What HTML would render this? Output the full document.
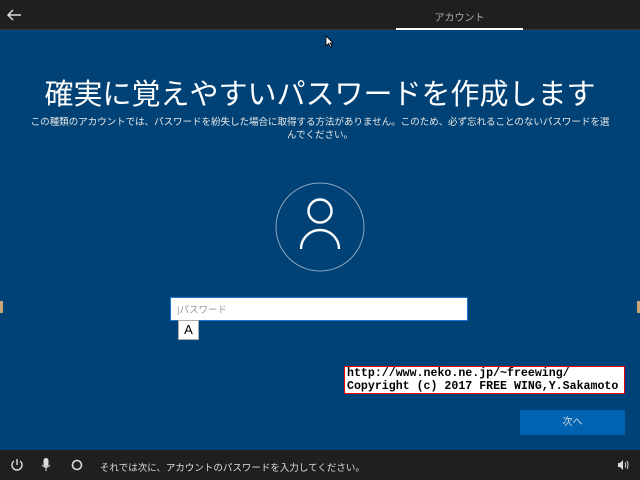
<!DOCTYPE html>
<html><head><meta charset="utf-8"><style>
body{margin:0;width:640px;height:480px;overflow:hidden;background:#004275;font-family:"Liberation Sans","Noto Sans CJK JP",sans-serif;position:relative;color:#fff}
.top{position:absolute;left:0;top:0;width:640px;height:29px;background:#1f1f1f;border-bottom:1px solid #3a3a3a}
.bot{position:absolute;left:0;top:450px;width:640px;height:30px;background:#1f1f1f}
.abs{position:absolute}
</style></head><body>
<div class="top">
<svg class="abs" style="left:6px;top:8px" width="16" height="14"><path d="M2 7H15M7 2L2 7L7 12" stroke="#ddd" stroke-width="1.5" fill="none"/></svg>
<div class="abs" style="left:396px;top:9px;width:127px;text-align:center;font-size:10px;color:#aaa">アカウント</div>
<div class="abs" style="left:396px;top:28px;width:127px;height:2px;background:#fff"></div>
</div>
<svg class="abs" style="left:325px;top:35px" width="9" height="13"><path d="M1 1V11L3.5 8.5L5.5 12L7 11.3L5 8H8Z" fill="#fff" stroke="#000" stroke-width=".8"/></svg>
<div class="abs" style="left:0;top:75px;width:640px;text-align:center;font-size:29px;line-height:40px;white-space:nowrap">確実に覚えやすいパスワードを作成します</div>
<div class="abs" style="left:28px;top:116px;width:584px;text-align:center;font-size:9.6px;line-height:13px;color:#e8e8e8;letter-spacing:-0.1px">この種類のアカウントでは、パスワードを紛失した場合に取得する方法がありません。このため、必ず忘れることのないパスワードを選<br>んでください。</div>
<svg class="abs" style="left:274px;top:181px" width="92" height="92"><circle cx="46" cy="46" r="44" stroke="#8aa6c0" stroke-width="1" fill="none"/><circle cx="46" cy="30" r="11.5" stroke="#fff" stroke-width="2.4" fill="none"/><path d="M27 68A19 19 0 0 1 65 68" stroke="#fff" stroke-width="2.4" fill="none"/></svg>
<div class="abs" style="left:170px;top:297px;width:296px;height:22px;background:#fff;border:1px solid #1a78d0"></div>
<div class="abs" style="left:177px;top:302px;font-size:9.5px;color:#999">|パスワード</div>
<div class="abs" style="left:178px;top:320px;width:19px;height:18px;background:#fff;border:1px solid #aaa;color:#000;font-size:13px;text-align:center;line-height:18px">A</div>
<div class="abs" style="left:344px;top:366px;width:277px;height:26px;background:#fff;border:1px solid #e00;color:#000;font-family:'Liberation Mono',monospace;font-weight:bold;font-size:11.6px;line-height:13px;padding-left:2px;white-space:nowrap;overflow:hidden">http://www.neko.ne.jp/~freewing/<br>Copyright (c) 2017 FREE WING,Y.Sakamoto</div>
<div class="abs" style="left:520px;top:410px;width:105px;height:25px;background:#0063b1;font-size:10px;text-align:center;line-height:25px;color:#ddd">次へ</div>
<div class="abs" style="left:0;top:301px;width:3px;height:12px;background:#c8a878"></div>
<div class="abs" style="left:637px;top:301px;width:3px;height:12px;background:#c8a878"></div>
<div class="bot">
<svg class="abs" style="left:10px;top:8px" width="14" height="14"><path d="M4 3A5 5 0 1 0 10 3" stroke="#ddd" stroke-width="1.4" fill="none"/><path d="M7 1V7" stroke="#ddd" stroke-width="1.4"/></svg>
<svg class="abs" style="left:41px;top:7px" width="10" height="15"><rect x="2.5" y="1" width="5" height="9" rx="2.5" fill="#ddd"/><path d="M1 8Q5 13 9 8M5 11V14" stroke="#ddd" fill="none"/></svg>
<svg class="abs" style="left:71px;top:9px" width="12" height="12"><circle cx="6" cy="6" r="4.5" stroke="#ddd" stroke-width="1.6" fill="none"/></svg>
<div class="abs" style="left:100px;top:10px;font-size:9.5px;color:#ddd;white-space:nowrap">それでは次に、アカウントのパスワードを入力してください。</div>
<svg class="abs" style="left:617px;top:9px" width="12" height="12"><path d="M1 4H3L6 1V11L3 8H1Z" fill="#ddd"/><path d="M8 3.5Q9.5 6 8 8.5M10 2Q12 6 10 10" stroke="#ddd" fill="none"/></svg>
</div>
</body></html>
